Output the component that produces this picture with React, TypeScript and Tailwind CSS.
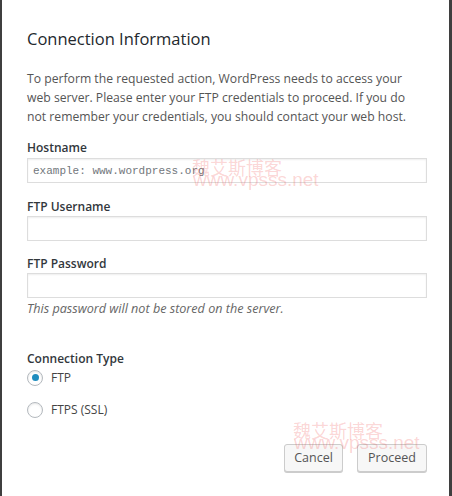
import React, { useState } from "react";

const inputCls =
  "block w-[400px] h-[25px] border border-[#ddd] bg-white px-[5px] text-[12px] text-[#333] outline-none shadow-[inset_0_1px_2px_rgba(0,0,0,0.07)]";

function Radio({ checked, label, onClick }: { checked: boolean; label: string; onClick: () => void }) {
  return (
    <button type="button" onClick={onClick} className="flex items-center gap-[8px] text-left">
      <span className="flex h-[16px] w-[16px] items-center justify-center rounded-full border border-[#b4b9be] bg-white shadow-[inset_0_1px_2px_rgba(0,0,0,0.1)]">
        {checked && <span className="h-[7px] w-[7px] rounded-full bg-[#1e8cbe]" />}
      </span>
      <span className="text-[12px] leading-[19px] text-[#444]">{label}</span>
    </button>
  );
}

export default function App() {
  const [type, setType] = useState("ftp");

  return (
    <div
      className="relative h-[496px] w-[452px] overflow-hidden border-l-2 border-r-[3px] border-[#3f3f3f] bg-white pl-[25px]"
      style={{ fontFamily: '"Open Sans", "Noto Sans", sans-serif' }}
    >
      <h1 className="pt-[27px] text-[16.5px] leading-[24px] font-normal text-[#23282d]">Connection Information</h1>

      <p className="mt-[18px] whitespace-nowrap text-[12.2px] leading-[19px] text-[#555]">
        To perform the requested action, WordPress needs to access your
        <br />
        web server. Please enter your FTP credentials to proceed. If you do
        <br />
        not remember your credentials, you should contact your web host.
      </p>

      <label className="mt-[12px] block text-[12px] leading-[19px] font-semibold text-[#32373c]">Hostname</label>
      <input
        type="text"
        placeholder="example: www.wordpress.org"
        className={inputCls + " mt-px placeholder:text-[#72777c]"}
        style={{ fontFamily: '"Liberation Mono", monospace', fontSize: "11px" }}
      />

      <label className="mt-[14px] block text-[12px] leading-[19px] font-semibold text-[#32373c]">FTP Username</label>
      <input type="text" className={inputCls} />

      <label className="mt-[13px] block text-[12px] leading-[19px] font-semibold text-[#32373c]">FTP Password</label>
      <input type="password" className={inputCls} />
      <p className="mt-[1px] text-[12.6px] leading-[19px] italic text-[#666]">
        This password will not be stored on the server.
      </p>

      <p className="mt-[31px] text-[12px] leading-[19px] font-semibold text-[#32373c]">Connection Type</p>
      <div className="flex flex-col gap-[13px]">
        <Radio checked={type === "ftp"} label="FTP" onClick={() => setType("ftp")} />
        <Radio checked={type === "ftps"} label="FTPS (SSL)" onClick={() => setType("ftps")} />
      </div>

      <div className="mt-[25px] flex w-[400px] justify-end gap-[14px]">
        <button
          type="button"
          className="h-[28px] w-[59px] rounded-[3px] border border-[#ccc] bg-[#f7f7f7] text-[12.5px] text-[#555] shadow-[0_1px_0_#ccc]"
        >
          Cancel
        </button>
        <button
          type="button"
          className="h-[28px] w-[70px] rounded-[3px] border border-[#ccc] bg-[#f7f7f7] text-[12.5px] text-[#555] shadow-[0_1px_0_#ccc]"
        >
          Proceed
        </button>
      </div>

      <div className="pointer-events-none absolute left-[190px] top-[158px] text-[18px] leading-[18px] text-[rgba(240,80,80,0.24)]" style={{ fontFamily: '"Noto Sans CJK SC", sans-serif' }}>
        魏艾斯博客
      </div>
      <div className="pointer-events-none absolute left-[191px] top-[170px] text-[19px] leading-[19px] text-[rgba(240,80,80,0.24)]" style={{ fontFamily: '"Liberation Sans", sans-serif' }}>
        www.vpsss.net
      </div>
      <div className="pointer-events-none absolute left-[291px] top-[421px] text-[18px] leading-[18px] text-[rgba(240,80,80,0.24)]" style={{ fontFamily: '"Noto Sans CJK SC", sans-serif' }}>
        魏艾斯博客
      </div>
      <div className="pointer-events-none absolute left-[292px] top-[433px] text-[19px] leading-[19px] text-[rgba(240,80,80,0.24)]" style={{ fontFamily: '"Liberation Sans", sans-serif' }}>
        www.vpsss.net
      </div>
    </div>
  );
}
